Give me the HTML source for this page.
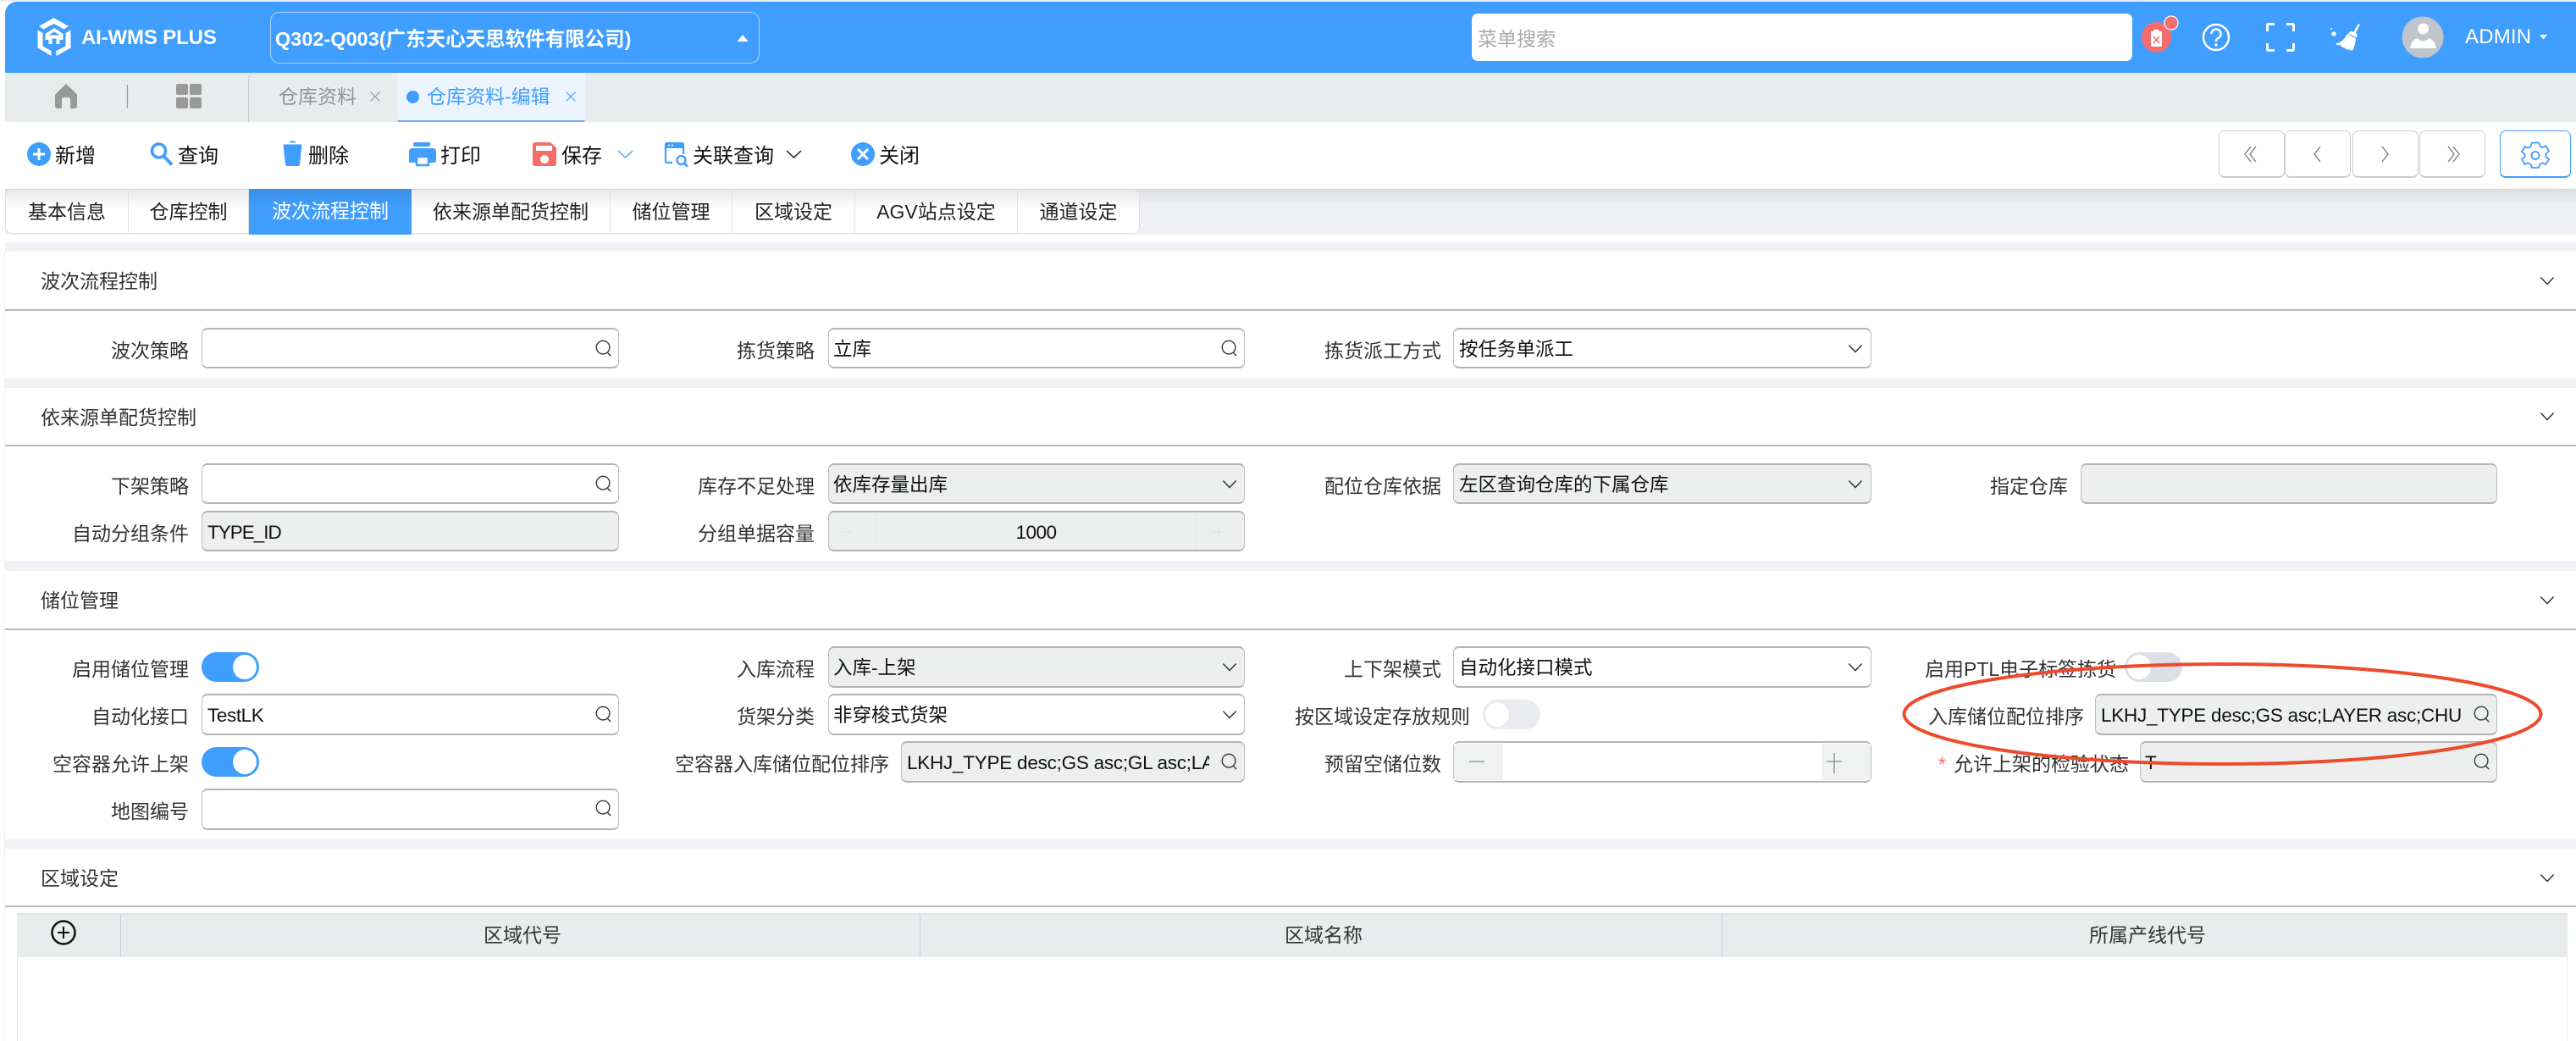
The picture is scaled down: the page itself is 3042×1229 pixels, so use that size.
<!DOCTYPE html>
<html lang="zh-CN">
<head>
<meta charset="utf-8">
<title>AI-WMS PLUS</title>
<style>
html,body{margin:0;padding:0;width:3042px;height:1229px;overflow:hidden;background:#fff}
body{position:relative;font-family:"Liberation Sans","Noto Sans CJK SC",sans-serif;color:#303133}
div,span{position:absolute;box-sizing:border-box;white-space:nowrap}
svg{position:absolute;overflow:visible}
.l{height:48px;line-height:54px;font-size:23px;text-align:right;left:0;color:#333}
.v{height:49px;line-height:52px;font-size:22.5px;color:#111;overflow:hidden}
.i{height:48px;border:1px solid #bdbdbd;border-top:2.5px solid #b4b4b4;border-bottom:2.5px solid #b4b4b4;border-radius:7px;background:#fff}
.h{height:49px}
.d{background:#ecefee}
.sec{left:6px;width:3036px;height:12px;background:#f0f2f5}
.hr{left:6px;width:3036px;height:2px;background:#b9b9b9}
.st{left:48px;font-size:23px;line-height:34px;color:#333}
.tb{top:224px;height:52px;line-height:52px;text-align:center;font-size:23px;color:#222;background:linear-gradient(#e9e9eb,#fff 45%);border-right:1px solid #dcdfe6;border-bottom:1px solid #dcdfe6}
.bt{font-size:24px;line-height:34px;top:168px;color:#111}
.nb{top:154px;height:56px;width:78px;border:1px solid #ccc;border-bottom:2px solid #ccc;border-radius:7px;background:#fff}
.th{top:1082px;font-size:23px;line-height:44px;color:#333;transform:translateX(-50%)}
.sw{height:35px;width:68px;border-radius:18px;background:#409eff}
.sw i{position:absolute;right:3px;top:3px;width:28px;height:29px;border-radius:50%;background:#fff}
.off i{left:3px;right:auto}
</style>
</head>
<body>
<svg width="0" height="0" style="position:absolute">
<defs>
<symbol id="s" viewBox="0 0 22 24"><circle cx="10" cy="11" r="8.6" fill="none" stroke="#333" stroke-width="1.5"/><path d="M16 18l4 4" stroke="#333" stroke-width="1.5" fill="none"/></symbol>
<symbol id="c" viewBox="0 0 20 12"><path d="M1.5 1.5l8.5 9 8.5-9" stroke="#333" stroke-width="1.6" fill="none"/></symbol>
</defs>
</svg>

<!-- top strip & header -->
<div style="left:0;top:0;width:3042px;height:2px;background:#e6eef8"></div>
<div style="left:6px;top:2px;width:3036px;height:84px;background:#409eff;border-top-left-radius:14px"></div>
<svg style="left:0;top:0" width="100" height="80" fill="#fff">
<path d="M63.500 21L81 31 75.500 34.500 63.500 28 51.500 34.500 46 31Z"/>
<path d="M44.500 35.500L50.500 39V54.500L60.500 60V66L44.500 56.500Z"/>
<path d="M83.500 35.500L77.500 39V54.500L66.500 60V66L83.500 56.500Z"/>
<path d="M64 33L74.500 40V47H70.500V52H66.500V45.500H61.500V52H57.500V47H53.500V40ZM64 37.500L57.500 41.500H70.500Z"/>
</svg>
<div style="left:96px;top:25px;font-size:24px;line-height:40px;font-weight:700;color:#fff;letter-spacing:-.15px">AI-WMS PLUS</div>
<div style="left:319px;top:14px;width:578px;height:61px;border:1.5px solid rgba(255,255,255,.55);border-radius:11px"></div>
<div style="left:325px;top:26px;font-size:23.500px;line-height:40px;font-weight:700;color:#fff">Q302-Q003(广东天心天思软件有限公司)</div>
<svg style="left:870px;top:40px" width="14" height="10"><path d="M7 1l6.500 8H.5z" fill="#fff"/></svg>
<div style="left:1738px;top:16px;width:780px;height:56px;background:#fff;border-radius:7px"></div>
<div style="left:1745px;top:26px;font-size:23px;line-height:40px;color:#aaa">菜单搜索</div>

<svg style="left:2520px;top:14px" width="520" height="60">
<ellipse cx="26.500" cy="30" rx="17.500" ry="18" fill="#f56c6c"/>
<path d="M20 23h13v18H20z" fill="#fff"/><rect x="23.500" y="21" width="6" height="3" fill="#fff"/>
<path d="M23 29l7 8M30 29l-7 8" stroke="#f56c6c" stroke-width="1.500"/>
<circle cx="44" cy="13" r="8" fill="#f56c6c" stroke="#fff" stroke-width="1.200"/>
<circle cx="97" cy="30" r="15" fill="none" stroke="#fff" stroke-width="2.500"/>
<path d="M91.500 26a5.500 5.500 0 1 1 8.500 4.600c-2 1.300-3 2-3 4.400" fill="none" stroke="#fff" stroke-width="2.500"/><circle cx="97" cy="39" r="1.700" fill="#fff"/>
<path d="M157.500 23v-7q0-1.500 1.500-1.500h7M180 14.500h7q1.500 0 1.500 1.500v7M188.500 37v7q0 1.500-1.500 1.500h-7M166 45.500h-7q-1.500 0-1.500-1.500v-7" fill="none" stroke="#fff" stroke-width="3"/>
<path d="M265 14l1.800 1-5 10 2.200 1.500-1 4-10-5 3-3 3 1.500z" fill="#fff"/>
<path d="M252.500 26l9.500 5.500c-.5 5-1.500 10-4 14.500l-5-2-1 1-4-3-1.500 .5-2-3-5-.5-1-2c5 0 9-3 13.500-11z" fill="#fff"/>
<circle cx="236" cy="26" r="2.700" fill="#fff"/><circle cx="233" cy="20" r="1" fill="#fff"/>
<circle cx="341" cy="30" r="24.500" fill="#c0c4cc"/>
<circle cx="341.500" cy="20" r="6.500" fill="#fff"/>
<path d="M326 43c1-7 5-11 9-12 2 2.500 4 3.500 6.500 3.500s4.500-1 6.500-3.500c4 1 8 5 9 12z" fill="#fff"/>
<path d="M479 27h9l-4.500 5.500z" fill="#fff"/>
</svg>
<div style="left:2911px;top:24px;font-size:24px;line-height:40px;color:#fff;letter-spacing:.2px">ADMIN</div>

<!-- tag bar -->
<div style="left:6px;top:86px;width:3036px;height:58px;background:#e9ecec"></div>
<svg style="left:0;top:86px" width="300" height="58">
<path d="M78 13L91 25.500V39q0 3-3 3H83V32q0-3-3-3H76q-3 0-3 3V42H68q-3 0-3-3V25.500Z" fill="#999"/>
<path d="M150.500 14V42" stroke="#999" stroke-width="1.200"/>
<g fill="#999"><rect x="208" y="13" width="14" height="13" rx="2"/><rect x="224" y="13" width="14" height="13" rx="2"/><rect x="208" y="29" width="14" height="13" rx="2"/><rect x="224" y="29" width="14" height="13" rx="2"/></g>
<path d="M293.500 58V8q0-8 8-8" fill="none" stroke="#c8cccc" stroke-width="1"/>
</svg>
<div style="left:329px;top:94px;font-size:23px;line-height:40px;color:#909399">仓库资料</div>
<svg style="left:436px;top:107px" width="14" height="14"><path d="M1.500 1.500l11 11M12.500 1.500l-11 11" stroke="#909399" stroke-width="1.100"/></svg>
<div style="left:469px;top:86px;width:222px;height:58px;background:#ecf5ff;border-bottom:2px solid #6aaef5;border-radius:0 0 3px 3px"></div>
<div style="left:480px;top:107px;width:15px;height:15px;border-radius:50%;background:#409eff"></div>
<div style="left:504px;top:94px;font-size:23px;line-height:40px;color:#409eff">仓库资料-编辑</div>
<svg style="left:667px;top:107px" width="14" height="14"><path d="M1.500 1.500l11 11M12.500 1.500l-11 11" stroke="#409eff" stroke-width="1.100"/></svg>

<!-- toolbar -->
<div style="left:6px;top:144px;width:3036px;height:79px;background:#fff"></div>
<svg style="left:0;top:144px" width="1100" height="79">
<circle cx="46" cy="38" r="14" fill="#409eff"/><path d="M39 38h14M46 31v14" stroke="#fff" stroke-width="3"/>
<circle cx="187.500" cy="34" r="8" fill="none" stroke="#409eff" stroke-width="3.600"/><path d="M193 40l10 10.500" stroke="#409eff" stroke-width="4"/>
<path d="M342 24.500q.5-2 2-2h3q1.500 0 2 2z" fill="#409eff"/><path d="M334.500 26.500h22l-2.500 24q-.2 1.500-2 1.500h-13q-1.800 0-2-1.500z" fill="#409eff"/>
<rect x="488" y="24" width="20" height="5" rx="1.500" fill="#409eff"/>
<path d="M487 31h24q4 0 4 4v10q0 3-3 3H484q-1 0-1-2V35q0-4 4-4z" fill="#409eff"/>
<rect x="492" y="41" width="14" height="10" fill="#fff" stroke="#409eff" stroke-width="2.500"/>
<path d="M632 24h18l7 6.500V49q0 3-3 3H632q-3 0-3-3V27q0-3 3-3z" fill="#f56c6c"/>
<rect x="633" y="28" width="19" height="6" fill="#fff"/><circle cx="643" cy="44" r="5" fill="#fff"/>
<path d="M730 34l8.500 8 8.500-8" fill="none" stroke="#66b1ff" stroke-width="1.600"/>
<path d="M794 48H788q-2 0-2-2V27q0-2 2-2H805q2 0 2 2V38" fill="none" stroke="#409eff" stroke-width="2.200"/>
<path d="M786 31h21V25H786z" fill="#409eff"/><path d="M789 27.500h2M793 27.500h2" stroke="#fff" stroke-width="1.500"/>
<circle cx="804.500" cy="45" r="5" fill="none" stroke="#409eff" stroke-width="2.500"/><path d="M808 49l4 3.500" stroke="#409eff" stroke-width="2.500"/>
<path d="M929 34l8.500 8 8.500-8" fill="none" stroke="#333" stroke-width="1.600"/>
<circle cx="1019" cy="38" r="14" fill="#409eff"/><path d="M1013 32l12 12M1025 32l-12 12" stroke="#fff" stroke-width="3"/>
</svg>
<div class="bt" style="left:65px">新增</div>
<div class="bt" style="left:210px">查询</div>
<div class="bt" style="left:364px">删除</div>
<div class="bt" style="left:520px">打印</div>
<div class="bt" style="left:663px">保存</div>
<div class="bt" style="left:818px">关联查询</div>
<div class="bt" style="left:1038px">关闭</div>

<div class="nb" style="left:2620px"></div>
<div class="nb" style="left:2698px"></div>
<div class="nb" style="left:2778px"></div>
<div class="nb" style="left:2857px"></div>
<div class="nb" style="left:2952px;width:84px;border-color:#409eff"></div>
<svg style="left:2620px;top:154px" width="420" height="56">
<g fill="none" stroke="#777" stroke-width="1.300">
<path d="M38 19l-7 9 7 9M44 19l-7 9 7 9"/>
<path d="M120 19l-7 9 7 9"/>
<path d="M193 19l7 9-7 9"/>
<path d="M271 19l7 9-7 9M277 19l7 9-7 9"/>
</g>
<path d="M370 14.500h8l1.500 4 3 1.500 4-1.500 3.500 6-3.500 3v3.500l3.500 3-3.500 6-4-1.500-3 1.500-1.500 4h-8l-1.500-4-3-1.500-4 1.500-3.500-6 3.500-3V28l-3.500-3 3.500-6 4 1.500 3-1.500z" fill="none" stroke="#409eff" stroke-width="1.800"/>
<circle cx="374" cy="29.500" r="4.500" fill="none" stroke="#409eff" stroke-width="1.800"/>
</svg>

<!-- tab strip -->
<div style="left:6px;top:223px;width:3036px;height:54px;background:linear-gradient(#dcdee2,#eef0f4 35%)"></div>
<div style="left:6px;top:223px;width:3036px;height:1px;background:#d4d5d8"></div>
<div class="tb" style="left:6px;width:146px;border-radius:8px 0 0 8px;border-left:1px solid #dcdfe6">基本信息</div>
<div class="tb" style="left:152px;width:142px">仓库控制</div>
<div class="tb" style="left:294px;width:192px;top:223px;height:54px;border:0;color:#fff;background:linear-gradient(#3a8ee6,#409eff 40%)">波次流程控制</div>
<div class="tb" style="left:486px;width:235px">依来源单配货控制</div>
<div class="tb" style="left:721px;width:144px">储位管理</div>
<div class="tb" style="left:865px;width:145px">区域设定</div>
<div class="tb" style="left:1010px;width:192px">AGV站点设定</div>
<div class="tb" style="left:1202px;width:144px;border-radius:0 8px 8px 0">通道设定</div>

<!-- bands -->
<div class="sec" style="top:286px;height:11px"></div>
<div class="sec" style="top:446px"></div>
<div class="sec" style="top:662px"></div>
<div class="sec" style="top:991px;height:11px"></div>
<div style="left:5px;top:297px;width:1px;height:932px;background:#eee"></div>
<div class="hr" style="top:365px"></div>
<div class="hr" style="top:525px"></div>
<div class="hr" style="top:742px"></div>
<div class="hr" style="top:1069px"></div>

<div class="st" style="top:315px">波次流程控制</div>
<div class="st" style="top:476px">依来源单配货控制</div>
<div class="st" style="top:692px">储位管理</div>
<div class="st" style="top:1020px">区域设定</div>
<svg style="left:2999px;top:326px;width:18px;height:11px"><use href="#c"/></svg>
<svg style="left:2999px;top:486px;width:18px;height:11px"><use href="#c"/></svg>
<svg style="left:2999px;top:703px;width:18px;height:11px"><use href="#c"/></svg>
<svg style="left:2999px;top:1031px;width:18px;height:11px"><use href="#c"/></svg>

<!-- section 1 -->
<div class="l" style="top:387px;width:223px">波次策略</div>
<div class="i" style="left:238px;top:387px;width:493px"></div>
<svg style="left:703px;top:400px;width:20px;height:22px"><use href="#s"/></svg>
<div class="l" style="top:387px;width:962px">拣货策略</div>
<div class="i" style="left:978px;top:387px;width:492px"></div>
<div class="v" style="left:984px;top:387px">立库</div>
<svg style="left:1442px;top:400px;width:20px;height:22px"><use href="#s"/></svg>
<div class="l" style="top:387px;width:1702px">拣货派工方式</div>
<div class="i" style="left:1716px;top:387px;width:494px"></div>
<div class="v" style="left:1723px;top:387px">按任务单派工</div>
<svg style="left:2182px;top:406px;width:18px;height:11px"><use href="#c"/></svg>

<!-- section 2 -->
<div class="l" style="top:547px;width:223px">下架策略</div>
<div class="i" style="left:238px;top:547px;width:493px"></div>
<svg style="left:703px;top:560px;width:20px;height:22px"><use href="#s"/></svg>
<div class="l" style="top:547px;width:962px">库存不足处理</div>
<div class="i d" style="left:978px;top:547px;width:492px"></div>
<div class="v" style="left:984px;top:547px">依库存量出库</div>
<svg style="left:1443px;top:566px;width:18px;height:11px"><use href="#c"/></svg>
<div class="l" style="top:547px;width:1702px">配位仓库依据</div>
<div class="i d" style="left:1716px;top:547px;width:494px"></div>
<div class="v" style="left:1723px;top:547px">左区查询仓库的下属仓库</div>
<svg style="left:2182px;top:566px;width:18px;height:11px"><use href="#c"/></svg>
<div class="l" style="top:547px;width:2442px">指定仓库</div>
<div class="i d" style="left:2457px;top:547px;width:492px"></div>

<div class="l" style="top:603px;width:223px">自动分组条件</div>
<div class="i d" style="left:238px;top:603px;width:493px"></div>
<div class="v" style="left:245px;top:603px;letter-spacing:-1px">TYPE_ID</div>
<div class="l" style="top:603px;width:962px">分组单据容量</div>
<div class="i d" style="left:978px;top:603px;width:492px"></div>
<div style="left:1035px;top:606px;width:1px;height:43px;background:#e4e7ed"></div>
<div style="left:1412px;top:606px;width:1px;height:43px;background:#e4e7ed"></div>
<svg style="left:990px;top:620px" width="470" height="16"><path d="M0 8h16M440 8h18M449 0v16" stroke="#e2e5e9" stroke-width="1.200"/></svg>
<div class="v" style="left:1035px;top:603px;width:377px;text-align:center;letter-spacing:-.5px">1000</div>

<!-- section 3 -->
<div class="l" style="top:763px;width:223px">启用储位管理</div>
<div class="sw" style="left:238px;top:770px"><i></i></div>
<div class="l" style="top:763px;width:962px">入库流程</div>
<div class="i d h" style="left:978px;top:763px;width:492px"></div>
<div class="v" style="left:984px;top:763px">入库-上架</div>
<svg style="left:1443px;top:782px;width:18px;height:11px"><use href="#c"/></svg>
<div class="l" style="top:763px;width:1702px">上下架模式</div>
<div class="i h" style="left:1716px;top:763px;width:494px"></div>
<div class="v" style="left:1723px;top:763px">自动化接口模式</div>
<svg style="left:2182px;top:782px;width:18px;height:11px"><use href="#c"/></svg>
<div class="l" style="top:763px;left:2273px;width:222px;text-align:left">启用PTL电子标签拣货</div>
<div class="sw off" style="left:2509px;top:770px;background:#dcdfe6"><i></i></div>

<div class="l" style="top:819px;width:223px">自动化接口</div>
<div class="i h" style="left:238px;top:819px;width:493px"></div>
<div class="v" style="left:245px;top:819px;letter-spacing:-.4px">TestLK</div>
<svg style="left:703px;top:832px;width:20px;height:22px"><use href="#s"/></svg>
<div class="l" style="top:819px;width:962px">货架分类</div>
<div class="i h" style="left:978px;top:819px;width:492px"></div>
<div class="v" style="left:984px;top:819px">非穿梭式货架</div>
<svg style="left:1443px;top:838px;width:18px;height:11px"><use href="#c"/></svg>
<div class="l" style="top:819px;width:1736px">按区域设定存放规则</div>
<div class="sw off" style="left:1751px;top:826px;background:#e9ebef"><i></i></div>
<div class="l" style="top:819px;left:2277px;width:183px">入库储位配位排序</div>
<div class="i d h" style="left:2474px;top:819px;width:475px"></div>
<div class="v" style="left:2481px;top:819px;width:426px;letter-spacing:-.25px">LKHJ_TYPE desc;GS asc;LAYER asc;CHUN</div>
<svg style="left:2921px;top:832px;width:20px;height:22px"><use href="#s"/></svg>

<div class="l" style="top:875px;width:223px">空容器允许上架</div>
<div class="sw" style="left:238px;top:882px"><i></i></div>
<div class="l" style="top:875px;width:1050px">空容器入库储位配位排序</div>
<div class="i d h" style="left:1064px;top:875px;width:406px"></div>
<div class="v" style="left:1071px;top:875px;width:357px;letter-spacing:-.25px">LKHJ_TYPE desc;GS asc;GL asc;LAYER</div>
<svg style="left:1442px;top:888px;width:20px;height:22px"><use href="#s"/></svg>
<div class="l" style="top:875px;width:1702px">预留空储位数</div>
<div class="i h" style="left:1716px;top:875px;width:494px"></div>
<div style="left:1717px;top:878px;width:57px;height:43px;background:#f0f2f2;border-right:1px solid #e4e7ed"></div>
<div style="left:2152px;top:878px;width:57px;height:43px;background:#f0f2f2;border-left:1px solid #e4e7ed"></div>
<svg style="left:1735px;top:885px" width="460" height="26"><path d="M0 14h18M422 14h18M431 4v24" stroke="#888" stroke-width="1.300" fill="none"/></svg>
<div class="l" style="top:875px;left:2289px;width:16px;text-align:left;color:#f56c6c">*</div>
<div class="l" style="top:875px;left:2307px;width:205px">允许上架的检验状态</div>
<div class="i d h" style="left:2527px;top:875px;width:422px"></div>
<div class="v" style="left:2533px;top:875px">T</div>
<svg style="left:2921px;top:888px;width:20px;height:22px"><use href="#s"/></svg>

<div class="l" style="top:931px;width:223px">地图编号</div>
<div class="i h" style="left:238px;top:931px;width:493px"></div>
<svg style="left:703px;top:943px;width:20px;height:22px"><use href="#s"/></svg>

<!-- table -->
<div style="left:20px;top:1078px;width:3012px;height:52px;background:#e9ecec;border-top:2px solid #dfe2e2"></div>
<div style="left:20px;top:1130px;width:1px;height:99px;background:#eaeaea"></div>
<div style="left:3031px;top:1130px;width:1px;height:99px;background:#eaeaea"></div>
<div style="left:142px;top:1079px;width:1px;height:51px;background:#c6ced9"></div>
<div style="left:1086px;top:1079px;width:1px;height:51px;background:#c6ced9"></div>
<div style="left:2033px;top:1079px;width:1px;height:51px;background:#c6ced9"></div>
<svg style="left:60px;top:1086px" width="30" height="30"><circle cx="15" cy="15" r="13.500" fill="none" stroke="#111" stroke-width="2.500"/><path d="M15 8v14M8 15h14" stroke="#111" stroke-width="2"/></svg>
<div class="th" style="left:617px">区域代号</div>
<div class="th" style="left:1563px">区域名称</div>
<div class="th" style="left:2536px">所属产线代号</div>

<!-- annotation -->
<svg style="left:0;top:0" width="3042" height="1229"><ellipse cx="2624.500" cy="843" rx="376" ry="59" fill="none" stroke="#ee4a2d" stroke-width="4"/></svg>
</body>
</html>
